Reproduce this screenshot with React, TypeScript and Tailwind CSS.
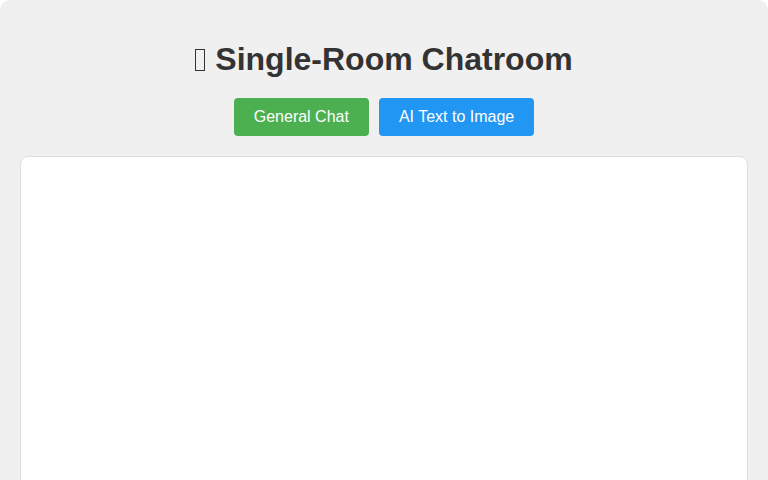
export default function App() {
  return (
    <div className="min-h-screen bg-white" style={{ fontFamily: '"Liberation Sans", Arial, sans-serif' }}>
      <div className="bg-[#f0f0f0] rounded-t-[10px] px-5 pt-5 pb-5">
        <h1 className="mt-[21px] mb-5 flex items-center justify-center text-[32px] leading-[37px] font-bold text-[#333]">
          {/* missing emoji glyph renders as a box */}
          <span className="inline-block w-[10px] h-[22px] border-[1.5px] border-[#333] mt-[1px] mr-[10px]" />
          <span>Single-Room Chatroom</span>
        </h1>
        <div className="flex justify-center gap-[10px]">
          <button className="h-[38px] px-5 rounded-[4px] bg-[#4caf50] text-white text-base">General Chat</button>
          <button className="h-[38px] px-5 rounded-[4px] bg-[#2196f3] text-white text-base">AI Text to Image</button>
        </div>
        <div className="mt-5 h-[400px] bg-white border border-[#ddd] rounded-lg" />
      </div>
    </div>
  );
}
